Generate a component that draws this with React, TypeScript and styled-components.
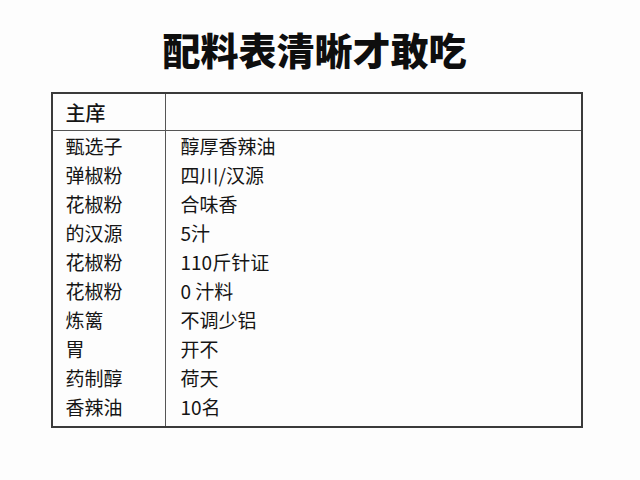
import React from 'react';
import styled, { createGlobalStyle } from 'styled-components';

const GlobalStyle = createGlobalStyle`
  html, body {
    margin: 0;
    padding: 0;
    background: #fdfdfd;
  }
  body {
    font-family: "Noto Sans CJK SC", "Noto Sans", sans-serif;
    color: #151515;
  }
`;

const Page = styled.div`
  width: 640px;
  height: 480px;
  display: flex;
  flex-direction: column;
  align-items: center;
  padding-top: 27px;
  box-sizing: border-box;
`;

const Title = styled.h1`
  margin: 0 11px 0 0;
  font-size: 38px;
  line-height: 44px;
  font-weight: 900;
  color: #0e0e0e;
`;

const Table = styled.div`
  margin: 21px 7px 0 0;
  width: 532px;
  border: 2px solid #3a3a3a;
  box-sizing: border-box;
  display: grid;
  grid-template-columns: 113px 1fr;
`;

const HeadCell = styled.div<{ $last?: boolean }>`
  height: 36px;
  display: flex;
  align-items: center;
  padding-left: 13px;
  font-size: 20px;
  font-weight: 500;
  border-bottom: 1px solid #555;
  border-right: ${p => (p.$last ? 'none' : '1px solid #555')};
`;

const Column = styled.div<{ $left?: boolean }>`
  display: flex;
  flex-direction: column;
  padding: 0 0 5px ${p => (p.$left ? '13px' : '15px')};
  border-right: ${p => (p.$left ? '1px solid #555' : 'none')};
`;

const Cell = styled.div`
  height: 29px;
  line-height: 29px;
  font-size: 19px;
  white-space: nowrap;
`;

const rows: [string, string][] = [
  ['甄选子', '醇厚香辣油'],
  ['弹椒粉', '四川/汉源'],
  ['花椒粉', '合味香'],
  ['的汉源', '5汁'],
  ['花椒粉', '110斤针证'],
  ['花椒粉', '0 汁料'],
  ['炼篱', '不调少铝'],
  ['胃', '开不'],
  ['药制醇', '荷天'],
  ['香辣油', '10名'],
];

export default function App() {
  return (
    <>
      <GlobalStyle />
      <Page>
        <Title>配料表清晰才敢吃</Title>
        <Table>
          <HeadCell>主庠</HeadCell>
          <HeadCell $last />
          <Column $left>
            {rows.map(([k], i) => (
              <Cell key={i}>{k}</Cell>
            ))}
          </Column>
          <Column>
            {rows.map(([, v], i) => (
              <Cell key={i}>{v}</Cell>
            ))}
          </Column>
        </Table>
      </Page>
    </>
  );
}
